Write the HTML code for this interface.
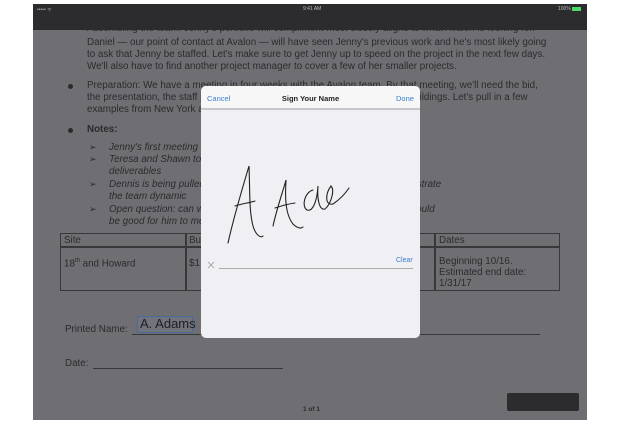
<!DOCTYPE html>
<html><head><meta charset="utf-8"><style>
*{margin:0;padding:0;box-sizing:border-box}
body{width:640px;height:426px;background:#fff;position:relative;overflow:hidden;font-family:"Liberation Sans",sans-serif}
#scr{position:absolute;left:33px;top:4px;width:554px;height:416px;background:#6f6f73;overflow:hidden}
#sb{position:absolute;left:0;top:0;width:554px;height:26px;background:#2c2c2e;z-index:2}
.t{position:absolute;color:#2b2b2e;font-size:9.8px;white-space:nowrap}
.i{font-style:italic}
.dot{position:absolute;width:5px;height:5px;border-radius:50%;background:#2b2b2e}
.ar{position:absolute;color:#2b2b2e;font-size:9px}
#modal{position:absolute;left:201px;top:86px;width:219px;height:252px;background:#efeff4;border-radius:5px;overflow:hidden}
#mh{position:absolute;left:0;top:0;width:219px;height:24px;background:#f7f7f7;border-bottom:2px solid #c8c8cc}
.b{color:#3a7fd0;font-size:7.5px;position:absolute}
</style></head><body>
<div id="scr">
<div id="sb">
<div style="position:absolute;left:4px;top:3px;color:#aaa;font-size:5px">••••• ᯤ</div>
<div style="position:absolute;left:270px;top:2px;color:#bbb;font-size:5px">9:41 AM</div>
<div style="position:absolute;left:525px;top:2px;color:#bbb;font-size:5px">100%</div>
<div style="position:absolute;left:539px;top:3px;width:9px;height:4px;background:#4cd964"></div>
</div>
<div class="t" style="left:54px;top:19px">Assembling the team: Jenny's portfolio will compliment most closely aligns to what Avalon is looking for.</div>
<div class="t" style="left:54px;top:33px">Daniel — our point of contact at Avalon — will have seen Jenny's previous work and he's most likely going</div>
<div class="t" style="left:54px;top:45px">to ask that Jenny be staffed. Let's make sure to get Jenny up to speed on the project in the next few days.</div>
<div class="t" style="left:54px;top:57px">We'll also have to find another project manager to cover a few of her smaller projects.</div>
<div class="dot" style="left:35px;top:80px"></div>
<div class="t" style="left:54px;top:76px">Preparation: We have a meeting in four weeks with the Avalon team. By that meeting, we'll need the bid,</div>
<div class="t" style="left:54px;top:88px">the presentation, the staff plans and examples of previous work on similar buildings. Let's pull in a few</div>
<div class="t" style="left:54px;top:100px">examples from New York and Chicago.</div>
<div class="dot" style="left:35px;top:124px"></div>
<div class="t" style="left:54px;top:120px;font-weight:bold">Notes:</div>
<div class="ar" style="left:56px;top:138px">➢</div><div class="t i" style="left:76px;top:138px">Jenny's first meeting with the team is next week</div>
<div class="ar" style="left:56px;top:150px">➢</div><div class="t i" style="left:76px;top:150px">Teresa and Shawn to lead team on requirements, budget, and bid</div>
<div class="t i" style="left:76px;top:162px">deliverables</div>
<div class="ar" style="left:56px;top:175px">➢</div><div class="t i" style="left:76px;top:175px">Dennis is being pulled to another project; need collaborators to help illustrate</div>
<div class="t i" style="left:76px;top:187px">the team dynamic</div>
<div class="ar" style="left:56px;top:200px">➢</div><div class="t i" style="left:76px;top:200px">Open question: can we schedule a meeting for next week with Staff? Could</div>
<div class="t i" style="left:76px;top:212px">be good for him to meet the team.</div>
<div style="position:absolute;left:27px;top:229px;width:500px;height:58px;border:1.5px solid #38383b"></div>
<div style="position:absolute;left:27px;top:242px;width:500px;height:1.5px;background:#38383b"></div>
<div style="position:absolute;left:152px;top:229px;width:1.5px;height:58px;background:#38383b"></div>
<div style="position:absolute;left:401px;top:229px;width:1.5px;height:58px;background:#38383b"></div>
<div class="t" style="left:31px;top:231px">Site</div>
<div class="t" style="left:156px;top:231px">Budget</div>
<div class="t" style="left:406px;top:231px">Dates</div>
<div class="t" style="left:31px;top:254px">18<sup style="font-size:6px">th</sup> and Howard</div>
<div class="t" style="left:156px;top:254px">$1</div>
<div class="t" style="left:406px;top:252px;line-height:11px">Beginning 10/16.<br>Estimated end date:<br>1/31/17</div>
<div class="t" style="left:32px;top:320px">Printed Name: </div>
<div style="position:absolute;left:99px;top:330px;width:408px;height:1px;background:#38383b"></div>
<div style="position:absolute;left:104px;top:312px;width:56px;height:17px;border:1px solid #4a6a9a;background:rgba(120,130,150,.25)"></div>
<div class="t" style="left:107px;top:312px;font-size:13px;color:#1f1f22">A. Adams</div>
<div class="t" style="left:32px;top:354px">Date: </div>
<div style="position:absolute;left:60px;top:364px;width:190px;height:1px;background:#38383b"></div>
<div class="t" style="left:270px;top:402px;font-size:6.5px;font-weight:bold">1 of 1</div>
<div style="position:absolute;left:474px;top:389px;width:72px;height:18px;background:#2c2c2e;border-radius:2px"></div>
</div>
<div id="modal">
<div id="mh">
<div class="b" style="left:6px;top:8px">Cancel</div>
<div style="position:absolute;left:0;width:219px;top:8px;text-align:center;font-size:7.5px;font-weight:bold;color:#222">Sign Your Name</div>
<div class="b" style="left:195px;top:8px">Done</div>
</div>
<svg style="position:absolute;left:0;top:0" width="219" height="252">
<g fill="none" stroke="#222" stroke-width="1.1" stroke-linecap="round">
<path d="M27 157 C33 130 42 100 48 80 C49 105 48 125 52 140 C55 150 60 152 62 150"/>
<path d="M34 120 C40 118 47 117 54 115"/>
<path d="M72 140 C76 122 82 105 85 94 C84 110 84 128 92 138 C96 142 100 143 102 141"/>
<path d="M74 122 C80 120 86 118 94 117"/>
<path d="M112 104 C104 106 100 120 106 124 C112 126 116 115 117 100 C116 112 118 125 124 123 C130 118 134 104 130 100 C124 108 124 120 132 118 C138 114 144 108 148 102"/>
</g>
<path d="M7 176 L13 182 M13 176 L7 182" stroke="#999" stroke-width="0.8"/>
<rect x="18" y="182" width="194" height="1" fill="#aaa"/>
</svg>
<div class="b" style="left:195px;top:171px;font-size:7px">Clear</div>
</div>
</body></html>
